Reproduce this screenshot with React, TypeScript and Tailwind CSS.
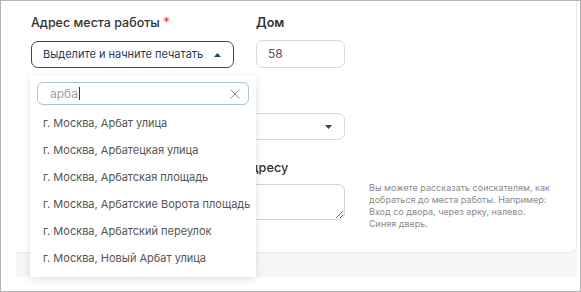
import { X } from "lucide-react";

const OPTIONS = [
  "г. Москва, Арбат улица",
  "г. Москва, Арбатецкая улица",
  "г. Москва, Арбатская площадь",
  "г. Москва, Арбатские Ворота площадь",
  "г. Москва, Арбатский переулок",
  "г. Москва, Новый Арбат улица",
];

function Caret({ up }: { up?: boolean }) {
  return (
    <svg width="7" height="4" viewBox="0 0 7 4" className="text-[#23456b]">
      <path d={up ? "M0 4 L3.5 0 L7 4 Z" : "M0 0 L3.5 4 L7 0 Z"} fill="currentColor" />
    </svg>
  );
}

export default function App() {
  return (
    <div className="h-[292px] w-[581px] overflow-hidden border border-[#b4b4b4] bg-white font-['Inter',sans-serif]">
      <div className="ml-[15px] mr-[3px] bg-[#f5f6f8] pb-[24px]">
        <div className="relative h-[252px] rounded-br-[8px] border-r border-b border-[#ebebeb] bg-white pl-[15px] pt-[14px]">
          <div className="flex gap-[22px]">
            <div className="w-[203px]">
              <div className="h-[16px] text-[12.5px] leading-[16px] font-medium text-[#333]">
                Адрес места работы <span className="text-[#e53935]">*</span>
              </div>
              <button className="mt-[10px] flex h-[27px] w-full items-center justify-between whitespace-nowrap rounded-[7px] border border-[#2a4b6e] pl-[11px] pr-[12px] text-[11px] text-[#1f3b5c]">
                <span>Выделите и начните печатать</span>
                <Caret up />
              </button>
            </div>
            <div className="w-[89px]">
              <div className="h-[16px] text-[12.5px] leading-[16px] font-semibold text-[#333]">Дом</div>
              <div className="mt-[9px] flex h-[28px] w-full items-center rounded-[7px] border border-[#d9d9d9] pl-[11px] text-[12px] text-[#555]">58</div>
            </div>
          </div>

          <div className="mt-[21px] w-[314px]">
            <div className="h-[16px]" />
            <div className="mt-[8px] flex h-[27px] w-full items-center justify-end rounded-[7px] border border-[#d9d9d9] pr-[12px]">
              <Caret />
            </div>
          </div>

          <div className="mt-[20px] flex gap-[24px]">
            <div className="w-[314px]">
              <div className="h-[16px] whitespace-nowrap text-[12.75px] leading-[16px] font-medium text-[#333]">Дополнительная информация по адресу</div>
              <textarea className="mt-[8px] block h-[36px] w-full resize-y rounded-[7px] border border-[#d2d2d2] outline-none" />
            </div>
            <p className="mt-[22px] w-[186px] text-[9px] leading-[12px] text-[#8a8a8a]">
              Вы можете рассказать соискателям, как добраться до места работы. Например: Вход со двора, через арку, налево. Синяя дверь.
            </p>
          </div>

          <div className="absolute left-[14px] top-[75px] z-10 h-[201px] w-[226px] bg-white shadow-[0_2px_8px_rgba(0,0,0,0.12)]">
            <div className="px-[7px] pt-[6px]">
              <div className="flex h-[23px] items-center justify-between rounded-[6px] border border-[#a9c4e2] pl-[12px] pr-[5px] text-[12px] text-[#9a9fa6]">
                <span className="flex items-center">
                  арба<span className="ml-[1px] h-[13px] w-[1px] bg-[#333]" />
                </span>
                <X size={16} strokeWidth={1.5} className="text-[#8d8d8d]" />
              </div>
            </div>
            <ul className="mt-[5px]">
              {OPTIONS.map((option) => (
                <li key={option} className="flex h-[27px] items-center pl-[13px] text-[11px] text-[#555]">
                  {option}
                </li>
              ))}
            </ul>
          </div>
        </div>
      </div>
    </div>
  );
}
